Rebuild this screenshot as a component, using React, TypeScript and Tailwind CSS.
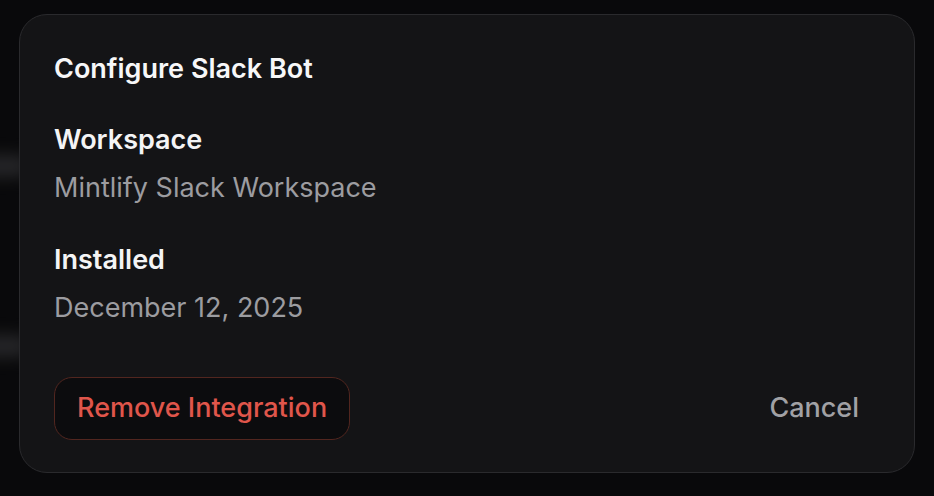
import React from 'react';

const Field = ({ label, value, className = '' }: { label: string; value: string; className?: string }) => (
  <div className={className}>
    <div className="text-[27px] leading-[36px] font-semibold text-[#f4f4f5]">{label}</div>
    <div className="mt-[12px] text-[27px] leading-[36px] text-[#9c9ca0]">{value}</div>
  </div>
);

export default function App() {
  return (
    <div
      className="relative w-[934px] h-[496px] overflow-hidden bg-[#09090b] px-[19px] pt-[14px]"
      style={{ fontFamily: 'Inter, "Noto Sans", sans-serif' }}
    >
      {/* blurred content behind the dialog */}
      <div className="absolute left-[-30px] top-[155px] w-[60px] h-[22px] rounded-full bg-[#3a3a3c] blur-[8px] opacity-60" />
      <div className="absolute left-[-30px] top-[335px] w-[60px] h-[22px] rounded-full bg-[#3a3a3c] blur-[8px] opacity-60" />

      <div className="relative w-[896px] h-[459px] rounded-[28px] border border-[#2a2a2d] bg-[#141416] pl-[34px] pr-[34px] pt-[36px] pb-[32px] flex flex-col">
        <h2 className="text-[27px] leading-[36px] font-semibold text-[#f7f7f8]">Configure Slack Bot</h2>

        <Field className="mt-[35px]" label="Workspace" value="Mintlify Slack Workspace" />
        <Field className="mt-[36px]" label="Installed" value="December 12, 2025" />

        <div className="mt-auto flex items-center justify-between">
          <button className="h-[63px] px-[22px] rounded-[18px] border border-[#52261f] bg-[#0c0c0e] text-[27px] font-medium text-[#e0564b]">
            Remove Integration
          </button>
          <button className="h-[63px] px-[21px] text-[27px] font-medium text-[#a1a1a5]">Cancel</button>
        </div>
      </div>
    </div>
  );
}
